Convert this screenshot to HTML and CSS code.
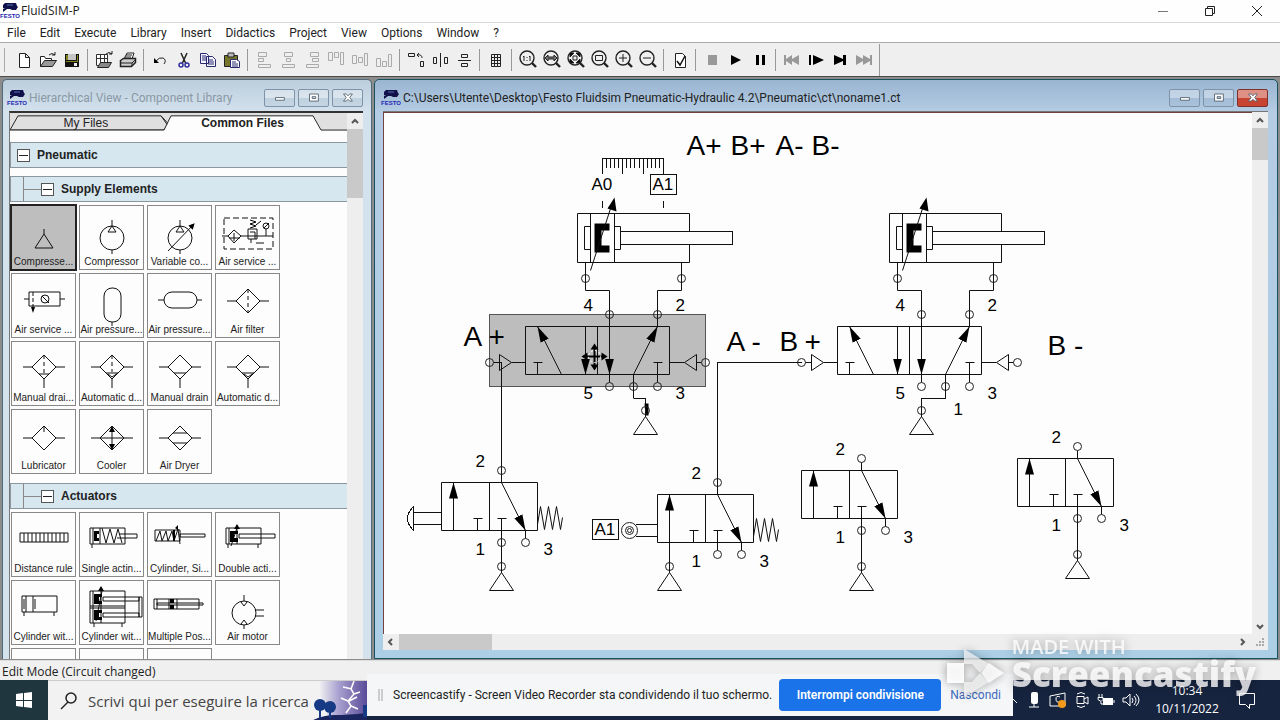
FILE: index.html
```html
<!DOCTYPE html>
<html lang="it">
<head>
<meta charset="utf-8">
<title>FluidSIM-P</title>
<link rel="stylesheet" href="styles.css">
</head>
<body>
<svg class="defs" aria-hidden="true">
  <defs>
    <symbol id="festo" viewBox="0 0 16 16" overflow="visible"><path d="M3 0h11l1 3 1 1-2 3h-4L8 6H5L1 9V6l2-1H1V2z" fill="#10104a"/><path d="M5 2h6" stroke="#5570b0"/><text x="-2" y="15" class="festo-text">FESTO</text></symbol>
    <symbol id="lens" viewBox="0 0 20 20"><circle cx="9" cy="8" r="7" fill="none" stroke="#222" stroke-width="1.4"/><path d="M14 13l4 4" stroke="#222" stroke-width="2.4"/></symbol>
    <symbol id="diamond" viewBox="0 0 64 50"><path d="M20 25l12-12 12 12-12 12zM11 25h9M44 25h9" class="ln"/></symbol>
    <symbol id="pump" viewBox="0 0 64 50"><circle cx="32" cy="32" r="12" class="ln"/><path d="M32 14v6l-4 6h8l-4-6M32 44v4" class="ln"/></symbol>
    <marker id="head" viewBox="0 0 16 9" refX="16" refY="4.5" markerWidth="16" markerHeight="9" markerUnits="userSpaceOnUse" orient="auto"><path d="M0 0l16 4.5L0 9z"/></marker>
    <marker id="mini" viewBox="0 0 6 6" refX="5" refY="3" markerWidth="6" markerHeight="6" markerUnits="userSpaceOnUse" orient="auto"><path d="M0 0l6 3-6 3z"/></marker>
    <g id="cylinder">
      <path class="ln" d="M577 213h112v49H577zM590 213v49M614 213v49M584 226h6v23h-6zM614 226h6v23h-6z"/>
      <path class="rod" d="M620 231h112v13H620z"/>
      <path d="M594 223h15v7h-8v15h8v7h-15z"/>
      <path class="ln" d="M590 270L611 205"/><path d="M614 197l-7 11 9 3z"/>
      <path class="ln" d="M585 262v28h24v36M681 262v28h-24v36"/>
      <g class="port"><circle cx="585" cy="278" r="4"/><circle cx="681" cy="278" r="4"/><circle cx="609" cy="314" r="4"/><circle cx="657" cy="314" r="4"/></g>
    </g>
    <g id="valve52">
      <path class="ln" d="M525 326h144v48H525zM597 326v48M533 362h9M537 362v12M653 362h9M657 362v20M609 374v8M633 374v24M493 362h6M511 362h14M669 362h15M696 362h5M499 354v16l12-8zM696 354v16l-12-8z"/>
      <g class="ln"><path marker-end="url(#head)" d="M561 374L537 326"/><path marker-end="url(#head)" d="M585 326V374"/><path marker-end="url(#head)" d="M609 326V374"/><path marker-end="url(#head)" d="M633 374L657 326"/></g>
      <g class="port"><circle cx="489" cy="362" r="4"/><circle cx="705" cy="362" r="4"/><circle cx="609" cy="386" r="4"/><circle cx="633" cy="386" r="4"/><circle cx="657" cy="386" r="4"/></g>
    </g>
    <g id="valve32">
      <path class="ln" d="M0 0h96v48H0zM48 0v48M32 36h9M36 36v12M56 36h9M60 36v20M60-8V0M84 48v8"/>
      <g class="ln"><path marker-end="url(#head)" d="M12 48V0"/><path marker-end="url(#head)" d="M60 0L84 48"/></g>
      <g class="port"><circle cx="60" cy="-12" r="4"/><circle cx="60" cy="60" r="4"/><circle cx="84" cy="60" r="4"/></g>
      <g class="num"><text x="34" y="-16">2</text><text x="34" y="72">1</text><text x="102" y="72">3</text></g>
    </g>
    <g id="spring"><path class="ln" d="M96 42l3-18 4 23 4-23 4 23 4-23 4 23 2-12"/></g>
    <g id="supply"><circle class="port" cx="0" cy="-6" r="4"/><path class="ln" d="M0-8V0l-12 18h24L0 0"/></g>
  </defs>
</svg>

<div class="app">
  <header class="titlebar">
    <svg class="logo"><use href="#festo"/></svg>
    <h1 class="app-name">FluidSIM-P</h1>
    <div class="sys-buttons">
      <button class="sys" aria-label="Minimize"><svg width="12" height="12"><path d="M1 6.5h10" stroke="#777"/></svg></button>
      <button class="sys" aria-label="Restore"><svg width="12" height="12"><path d="M1.500 3.500h7v7h-7zM3.500 3V1.500h7v7H9" fill="none" stroke="#222"/></svg></button>
      <button class="sys" aria-label="Close"><svg width="12" height="12"><path d="M1 1l10 10M11 1L1 11" stroke="#222"/></svg></button>
    </div>
  </header>

  <nav class="menubar">
    <button>File</button><button>Edit</button><button>Execute</button><button>Library</button><button>Insert</button><button>Didactics</button><button>Project</button><button>View</button><button>Options</button><button>Window</button><button>?</button>
  </nav>

  <div class="toolbar">
    <span class="grip"></span>
    <button aria-label="New"><svg viewBox="0 0 20 20"><path d="M5.500 3.500h6l4 4v10h-10zM11.500 3.500v4h4" fill="#fff" stroke="#222"/></svg></button>
    <button aria-label="Open"><svg viewBox="0 0 20 20"><path d="M2.500 16.500v-10h4l1 2h6v3" fill="#fff" stroke="#222"/><path d="M2.500 16.500l4-6h12l-4 6z" fill="#999" stroke="#222"/><path d="M11 5q3-3 6 0M17 2v3h-3" fill="none" stroke="#222"/></svg></button>
    <button aria-label="Save"><svg viewBox="0 0 20 20"><path d="M3 4h14v13H3z" fill="#111"/><path d="M4 5h2v5H4zM15 5h1v6h-1zM4 11h12v1H4z" fill="#858520"/><path d="M6 4h8v6H6z" fill="#c5c5c5"/><path d="M12 13h3v3h-3z" fill="#eee"/></svg></button>
    <span class="sep"></span>
    <button aria-label="Library"><svg viewBox="0 0 20 20"><path d="M2.500 4.500h11v11h-11zM6.500 4v12M10.500 4v12M2 8.500h12" fill="#fff" stroke="#333"/><path d="M3.500 17.500l3-5h11l-3 5z" fill="#888" stroke="#222"/><path d="M12 4q3-3 6 0M18 1v3h-3" fill="none" stroke="#222"/></svg></button>
    <button aria-label="Print"><svg viewBox="0 0 20 20"><path d="M6 9l3-6h7l-2 6" fill="#fff" stroke="#222"/><path d="M2.500 10.500l3-2h12v4l-4 4h-11z" fill="#ccc" stroke="#222" stroke-width="1.500"/><path d="M3 13h11l3-3M14 13v3M8 5h6M7 7h6" fill="none" stroke="#222"/></svg></button>
    <span class="sep"></span>
    <button aria-label="Undo"><svg viewBox="0 0 20 20"><path d="M6 11q3-4 7-3 4 2 1 6" fill="none" stroke="#222"/><path d="M4 8v5h5z"/></svg></button>
    <button aria-label="Cut"><svg viewBox="0 0 20 20"><path d="M7 3l5 11M13 3L8 14" stroke="#222" stroke-width="1.500"/><g fill="none" stroke="#3030a0" stroke-width="1.500"><circle cx="7" cy="15" r="2"/><circle cx="13" cy="15" r="2"/></g></svg></button>
    <button aria-label="Copy"><svg viewBox="0 0 20 20"><g fill="#f4f4ff" stroke="#282870"><path d="M2.500 3.500h6l2 2v8h-8zM8.500 6.500h6l3 3v7h-9z"/><path d="M4 6h4M4 8h4M4 10h4M10 10h5M10 12h6M10 14h6"/></g></svg></button>
    <button aria-label="Paste"><svg viewBox="0 0 20 20"><path d="M2.500 5.500h13v11h-13z" fill="#77772b" stroke="#222"/><path d="M6 3h6v4H6z" fill="#bbb" stroke="#222"/><path d="M8.500 9.500h6l3 2v6h-9z" fill="#fff" stroke="#282870"/><path d="M10 12h4M10 14h6M10 16h6" stroke="#282870"/></svg></button>
    <span class="sep"></span>
    <button class="off" aria-label="Align left" disabled><svg viewBox="0 0 20 20"><path d="M4.500 2.500h8v4h-8zM4.500 8.500h5v3h-5zM4.500 14.500h12v3h-12z"/></svg></button>
    <button class="off" aria-label="Align centre" disabled><svg viewBox="0 0 20 20"><path d="M6.500 2.500h8v4h-8zM8.500 8.500h4v3h-4zM4.500 14.500h12v3h-12z"/></svg></button>
    <button class="off" aria-label="Align right" disabled><svg viewBox="0 0 20 20"><path d="M8.500 2.500h8v4h-8zM10.500 8.500h6v3h-6zM4.500 14.500h12v3h-12z"/></svg></button>
    <button class="off" aria-label="Align top" disabled><svg viewBox="0 0 20 20"><path d="M2.500 2.500h4v8h-4zM8.500 2.500h4v5h-4zM14.500 2.500h3v12h-3z"/></svg></button>
    <button class="off" aria-label="Align middle" disabled><svg viewBox="0 0 20 20"><path d="M2.500 5.500h4v8h-4zM8.500 7.500h4v5h-4zM14.500 3.500h3v12h-3z"/></svg></button>
    <button class="off" aria-label="Align bottom" disabled><svg viewBox="0 0 20 20"><path d="M2.500 8.500h4v8h-4zM8.500 11.500h4v5h-4zM14.500 4.500h3v12h-3z"/></svg></button>
    <span class="sep"></span>
    <button class="draw" aria-label="Rotate"><svg viewBox="0 0 20 20"><path d="M2.500 3.500h6v3h-6zM14.500 11.500h3v5h-3zM11 5q5-1 5 3M13 3l-2 2 2 2"/></svg></button>
    <button class="draw" aria-label="Mirror horizontal"><svg viewBox="0 0 20 20"><path d="M3.500 7.500h3v6h-3zM10.500 3v14M14.500 7.500h3v6h-3z"/></svg></button>
    <button class="draw" aria-label="Mirror vertical"><svg viewBox="0 0 20 20"><path d="M7.500 4.500h6v3h-6zM7.500 13.500h6v3h-6zM4 10.500h13"/></svg></button>
    <span class="sep"></span>
    <button class="draw" aria-label="Grid"><svg viewBox="0 0 20 20"><path d="M5.500 4.500h9v12h-9zM8.500 4v13M11.500 4v13M5 7.500h10M5 10.500h10M5 13.500h10"/></svg></button>
    <span class="sep"></span>
    <button aria-label="Actual size"><svg viewBox="0 0 20 20"><use href="#lens"/><path d="M5 7l1-1v5M9 7v1M9 10v1M11 7l1-1v5" fill="none" stroke="#222"/></svg></button>
    <button aria-label="Previous view"><svg viewBox="0 0 20 20"><use href="#lens"/><path d="M3 8l3-3v2h6V5l3 3-3 3V9H6v2z" fill="#777" stroke="#222"/></svg></button>
    <button aria-label="Fit to window"><svg viewBox="0 0 20 20"><use href="#lens"/><path d="M4 7V3h4zM14 7V3h-4zM4 9v4h4zM14 9v4h-4z" stroke="#222"/><path d="M7 6h4v4H7z" fill="none" stroke="#222"/></svg></button>
    <button class="draw" aria-label="Zoom window"><svg viewBox="0 0 20 20"><use href="#lens"/><path d="M5.500 5.500h7v5h-7z"/></svg></button>
    <button class="draw" aria-label="Zoom in"><svg viewBox="0 0 20 20"><use href="#lens"/><path d="M5 8h8M9 4v8"/></svg></button>
    <button class="draw" aria-label="Zoom out"><svg viewBox="0 0 20 20"><use href="#lens"/><path d="M5 8h8"/></svg></button>
    <span class="sep"></span>
    <button aria-label="Check"><svg viewBox="0 0 20 20"><path d="M5.500 3.500h7l3 3v11h-10z" fill="#fff" stroke="#222"/><path d="M7 11l3 4 5-9" fill="none" stroke="#111" stroke-width="1.500"/></svg></button>
    <span class="sep"></span>
    <button aria-label="Stop"><svg viewBox="0 0 20 20"><path d="M6 5h9v10H6z" fill="#999"/></svg></button>
    <button aria-label="Start"><svg viewBox="0 0 20 20"><path d="M5 5l10 5-10 5z"/></svg></button>
    <button aria-label="Pause"><svg viewBox="0 0 20 20"><path d="M6 5h3v10H6zM12 5h3v10h-3z"/></svg></button>
    <span class="sep"></span>
    <button aria-label="Reset"><svg viewBox="0 0 20 20"><path d="M2 5h2v4l6-4v4l7-4v10l-7-4v4l-6-4v4H2z" fill="#999"/></svg></button>
    <button aria-label="Single step"><svg viewBox="0 0 20 20"><path d="M3 5h2v10H3zM7 5l11 5-11 5z"/></svg></button>
    <button aria-label="Simulate until change"><svg viewBox="0 0 20 20"><path d="M4 5l9 4V5h3v10h-3v-4l-9 4z"/></svg></button>
    <button aria-label="Next topic"><svg viewBox="0 0 20 20"><path d="M2 5l7 4V5l7 4V5h2v10h-2v-4l-7 4v-4l-7 4z" fill="#999"/></svg></button>
    <span class="sep end"></span>
  </div>

  <main class="workspace">
    <section class="window library">
      <header class="win-title">
        <svg class="logo"><use href="#festo"/></svg>
        <h2>Hierarchical View - Component Library</h2>
        <button class="wbtn" aria-label="Minimize"><svg viewBox="0 0 30 18"><path d="M10.500 8.500h10v3h-10z"/></svg></button>
        <button class="wbtn" aria-label="Maximize"><svg viewBox="0 0 30 18"><path d="M10.500 4.500h10v8h-10zM13.500 7.500h4v2h-4z"/></svg></button>
        <button class="wbtn" aria-label="Close"><svg viewBox="0 0 30 18"><path d="M10.500 4.500h3l2 2 2-2h3l-3 4 3 4h-3l-2-2-2 2h-3l3-4z"/></svg></button>
      </header>
      <div class="lib-frame">
        <div class="lib-content">
          <div class="tabs">
            <svg class="tab-shape" viewBox="0 0 337 19" preserveAspectRatio="none"><path d="M0 18L8 3h143l7 8-4 7z" fill="#e0e0e0" stroke="#222"/><path d="M0 18h154L161 3h142l8 15h26v1H0z" fill="#fdfdfd"/><path d="M151 3l6 9M0 18h154L161 3h142l8 15h26" fill="none" stroke="#222"/></svg>
            <button class="tab">My Files</button>
            <button class="tab current">Common Files</button>
          </div>
          <div class="group"><button class="toggle" aria-label="Collapse Pneumatic"></button><h3>Pneumatic</h3></div>
          <div class="group sub"><button class="toggle" aria-label="Collapse Supply Elements"></button><h3>Supply Elements</h3></div>
          <div class="tiles">
            <button class="tile selected"><svg viewBox="0 0 64 50"><path class="ln" d="M32 23v5l-9 14h18L32 28"/></svg><span>Compresse...</span></button>
            <button class="tile"><svg viewBox="0 0 64 50"><use href="#pump"/></svg><span>Compressor</span></button>
            <button class="tile"><svg viewBox="0 0 64 50"><use href="#pump"/><path class="ln" marker-end="url(#mini)" d="M20 45L46 18"/></svg><span>Variable co...</span></button>
            <button class="tile"><svg viewBox="0 0 64 50"><path class="ln" stroke-dasharray="6 3" d="M8 12h49v31H8z"/><path class="ln" d="M6 30h6l6-6 7 6-7 7-6-7M25 30h32M32 23h9v10h-9zM50 23v7M13 32h11M34 26h5v7M35 33v4M40 37h8"/><path d="M34 14l6 2-6 2 6 2-6 2M40 19l5-4" fill="none" stroke="#000"/><circle class="ln" cx="50" cy="20" r="3"/><path class="ln" d="M48 22l5-5M18 27v8"/></svg><span>Air service ...</span></button>
            <button class="tile"><svg viewBox="0 0 64 50"><path class="ln" d="M17 18h31v14H17zM12 25h5M48 25h5M30 22l7 7"/><circle class="ln" cx="33" cy="25" r="4"/><path class="ln" stroke-dasharray="4 2" d="M21 18v16"/><path d="M19 33h4l-2 6z"/></svg><span>Air service ...</span></button>
            <button class="tile"><svg viewBox="0 0 64 50"><rect class="ln" x="24" y="14" width="17" height="34" rx="8"/><path class="ln" d="M32 48v4"/></svg><span>Air pressure...</span></button>
            <button class="tile"><svg viewBox="0 0 64 50"><rect class="ln" x="16" y="18" width="33" height="16" rx="8"/><path class="ln" d="M10 26h6M49 26h5"/></svg><span>Air pressure...</span></button>
            <button class="tile"><svg viewBox="0 0 64 50"><use href="#diamond" y="2"/><path class="ln" stroke-dasharray="4 3" d="M32 15v24"/></svg><span>Air filter</span></button>
            <button class="tile"><svg viewBox="0 0 64 50"><use href="#diamond"/><path class="ln" stroke-dasharray="4 3" d="M32 13v19"/><path class="ln" d="M27 32h10M32 37v9"/></svg><span>Manual drai...</span></button>
            <button class="tile"><svg viewBox="0 0 64 50"><use href="#diamond"/><path class="ln" stroke-dasharray="4 3" d="M32 13v17"/><path class="ln" d="M26 31h12l-6 4-4-3M32 37v9"/></svg><span>Automatic d...</span></button>
            <button class="tile"><svg viewBox="0 0 64 50"><use href="#diamond"/><path class="ln" d="M26 31h12M32 37v9"/></svg><span>Manual drain</span></button>
            <button class="tile"><svg viewBox="0 0 64 50"><use href="#diamond"/><path class="ln" d="M26 31h12l-6 4-4-3M32 37v9"/></svg><span>Automatic d...</span></button>
            <button class="tile"><svg viewBox="0 0 64 50"><use href="#diamond" y="3"/><path class="ln" d="M32 16v6M30 18l2-2 2 2"/></svg><span>Lubricator</span></button>
            <button class="tile"><svg viewBox="0 0 64 50"><use href="#diamond" y="3"/><path class="ln" d="M20 28h24M32 16v24"/><path d="M29 22l3-6 3 6zM29 34l3 6 3-6z"/></svg><span>Cooler</span></button>
            <button class="tile"><svg viewBox="0 0 64 50"><use href="#diamond" y="3"/><path class="ln" d="M25 23h14M25 33h14"/></svg><span>Air Dryer</span></button>
          </div>
          <div class="group sub"><button class="toggle" aria-label="Collapse Actuators"></button><h3>Actuators</h3></div>
          <div class="tiles">
            <button class="tile"><svg viewBox="0 0 64 50"><path class="ln" d="M8 20h48v9H8zM12 20v9M16 20v9M20 20v9M24 20v9M28 20v9M32 20v9M36 20v9M40 20v9M44 20v9M48 20v9M52 20v9"/></svg><span>Distance rule</span></button>
            <button class="tile"><svg viewBox="0 0 64 50"><path class="ln" d="M10 15h35v16H10zM12 31v4M13 15v16M20 15v16M22 15l4 15 4-14 4 14 4-14 4 14M39 21h18v4H37"/><path d="M14 18h5v3h-2v4h2v3h-5z"/></svg><span>Single actin...</span></button>
            <button class="tile"><svg viewBox="0 0 64 50"><path class="ln" d="M7 17h25v11H7zM8 28l4-10 2 10 4-10 2 10 4-10 2 10 4-12 2 15M32 21h25v3H32z"/><path d="M25 17h2v11h-2zM27 15l3-3v5z"/></svg><span>Cylinder, Si...</span></button>
            <button class="tile"><svg viewBox="0 0 64 50"><path class="ln" d="M10 15h35v16H10zM12 31v4M42 31v4M13 15v16M21 15v16M23 21h36v4H23zM15 33l6-18"/><path d="M14 18h8v3h-4v4h4v4h-8zM18 16l3-5 3 5z"/></svg><span>Double acti...</span></button>
            <button class="tile"><svg viewBox="0 0 64 50"><path class="ln" d="M10 15h35v16H10zM12 31v4M42 31v4M14 15v16M21 15v16M12 18v10M23 18v10"/></svg><span>Cylinder wit...</span></button>
            <button class="tile"><svg viewBox="0 0 64 50"><path class="ln" d="M10 10h35v32H10zM10 25h35M10 27h35M13 10v32M21 10v32M14 42v4M42 42v4M23 16h36v4H23zM23 32h36v4H23zM59 16h3v20h-3zM16 40l6-30"/><path d="M14 13h8v3h-3v4h3v3h-8zM14 29h8v3h-3v4h3v3h-8zM18 10l3-5 3 5z"/></svg><span>Cylinder wit...</span></button>
            <button class="tile"><svg viewBox="0 0 64 50"><path class="ln" d="M6 18h45v10H6zM9 18v10M21 18v10M29 18v10M9 22h46v2H9z"/><path d="M22 18h4v4h-4zM22 24h4v4h-4z"/></svg><span>Multiple Pos...</span></button>
            <button class="tile"><svg viewBox="0 0 64 50"><circle class="ln" cx="28" cy="32" r="12"/><path class="ln" d="M28 14v6M28 44v4M39 29h9M39 35h9M25 21l3 4 3-4M25 43l3-4 3 4"/></svg><span>Air motor</span></button>
            <button class="tile" aria-label="Semi-rotary actuator"></button><button class="tile" aria-label="Rodless cylinder"></button><button class="tile" aria-label="Linear drive"></button>
          </div>
        </div>
        <div class="vscroll"><button aria-label="Scroll up"><svg viewBox="0 0 16 16"><path d="M5 10l3-3 3 3"/></svg></button><span class="thumb tall"></span></div>
      </div>
    </section>

    <section class="window circuit">
      <header class="win-title">
        <svg class="logo"><use href="#festo"/></svg>
        <h2>C:\Users\Utente\Desktop\Festo Fluidsim Pneumatic-Hydraulic 4.2\Pneumatic\ct\noname1.ct</h2>
        <button class="wbtn" aria-label="Minimize"><svg viewBox="0 0 30 18"><path d="M10.500 8.500h10v3h-10z"/></svg></button>
        <button class="wbtn" aria-label="Maximize"><svg viewBox="0 0 30 18"><path d="M10.500 4.500h10v8h-10zM13.500 7.500h4v2h-4z"/></svg></button>
        <button class="wbtn close" aria-label="Close"><svg viewBox="0 0 30 18"><path d="M10.500 4.500h3l2 2 2-2h3l-3 4 3 4h-3l-2-2-2 2h-3l3-4z"/></svg></button>
      </header>
      <div class="doc">
        <div class="canvas">
          <svg class="diagram" viewBox="384 113 867 520" width="867" height="520">
            <g transform="translate(.5 .5)">
            <path class="selection" d="M489 314h216v72H489z"/>
            <g class="big"><text x="686" y="154">A+</text><text x="730" y="154">B+</text><text x="775" y="154">A-</text><text x="811" y="154">B-</text><text x="463" y="345">A</text><text x="488" y="345">+</text><text x="726" y="350">A -</text><text x="779" y="350">B</text><text x="804" y="350">+</text><text x="1047" y="354">B -</text></g>
            <path class="ln" d="M602 173V158h61v15M606 158v9M610 158v9M614 158v9M618 158v9M622 158v15M626 158v9M630 158v9M634 158v9M639 158v9M643 158v15M647 158v9M651 158v9M655 158v9M659 158v9M602 200v7M663 200v7M650 174h26v20h-26z"/>
            <g class="tag"><text x="591" y="189">A0</text><text x="652" y="189">A1</text><text x="594" y="534">A1</text></g>
            <use href="#cylinder"/><use href="#cylinder" x="312"/>
            <use href="#valve52"/><use href="#valve52" x="312"/>
            <g class="num"><text x="583" y="310">4</text><text x="675" y="310">2</text><text x="583" y="398">5</text><text x="675" y="398">3</text><text x="895" y="310">4</text><text x="987" y="310">2</text><text x="895" y="398">5</text><text x="987" y="398">3</text><text x="953" y="414">1</text></g>
            <path class="ln" d="M633 398h12v18M945 398h-24v18M499 362h2v120M717 494V362h84"/>
            <path d="M644 403h4v12h-3z"/>
            <use href="#supply" x="645" y="416"/><use href="#supply" x="921" y="416"/>
            <path class="ln" d="M501 530v42M669 542v30M861 518v54M1077 506v54"/>
            <use href="#valve32" x="441" y="482"/><use href="#spring" x="441" y="482"/>
            <path class="ln" d="M441 512h-28M441 524h-28M413 506v24q-12-12 0-24"/>
            <use href="#valve32" x="657" y="494"/><use href="#spring" x="657" y="494"/>
            <path class="ln" d="M635 524h22M635 536h22M592 519h26v20h-26z"/><g class="port"><circle cx="629" cy="530" r="8"/><circle cx="629" cy="530" r="4"/><circle cx="629" cy="530" r="2"/></g>
            <use href="#valve32" x="801" y="470"/><use href="#valve32" x="1017" y="458"/>
            <use href="#supply" x="501" y="572"/><use href="#supply" x="669" y="572"/><use href="#supply" x="861" y="572"/><use href="#supply" x="1077" y="560"/>
            <path class="cursor" d="M594 346v22M583 356h22"/><path d="M590 349l4-6 4 6zM590 364l4 6 4-6zM587 352l-6 4 6 4zM601 352l6 4-6 4z"/><circle cx="594" cy="356" r="6" fill="none" stroke="#fff" stroke-dasharray="2 2"/>
            </g>
          </svg>
        </div>
        <div class="vscroll"><button aria-label="Scroll up"><svg viewBox="0 0 16 16"><path d="M5 10l3-3 3 3"/></svg></button><span class="thumb"></span><button class="last" aria-label="Scroll down"><svg viewBox="0 0 16 16"><path d="M5 7l3 3 3-3"/></svg></button></div>
        <div class="hscroll"><button aria-label="Scroll left"><svg viewBox="0 0 16 16"><path d="M9 5L6 8l3 3"/></svg></button><span class="thumb"></span><button class="last" aria-label="Scroll right"><svg viewBox="0 0 16 16"><path d="M5 5l3 3-3 3"/></svg></button></div>
        <svg class="size-grip" viewBox="0 0 16 16"><path d="M10 4h2v2h-2zM7 7h2v2H7zM10 7h2v2h-2zM4 10h2v2H4zM7 10h2v2H7zM10 10h2v2h-2z"/></svg>
      </div>
    </section>
  </main>

  <div class="statusbar" role="status">Edit Mode (Circuit changed)</div>

  <footer class="taskbar">
    <button class="start" aria-label="Start"><svg width="16" height="16"><path d="M0 2l7-1v7H0zM8 1l8-1v8H8zM0 9h7v6l-7-1zM8 9h8v7l-8-1z" fill="#fff"/></svg></button>
    <div class="search">
      <svg width="18" height="18"><circle cx="11" cy="6" r="5" fill="none" stroke="#222" stroke-width="1.500"/><path d="M8 10l-7 7" stroke="#222" stroke-width="1.500"/></svg>
      <input type="text" aria-label="Cerca" placeholder="Scrivi qui per eseguire la ricerca">
      <svg class="storm" viewBox="0 0 56 40"><defs><linearGradient id="sky"><stop offset="0" stop-color="#f2f2f2"/><stop offset=".4" stop-color="#aaa2d0"/><stop offset="1" stop-color="#5a4a98"/></linearGradient></defs><path d="M8 0h48v40H20Q8 20 8 0z" fill="url(#sky)"/><path d="M0 40q12-6 24-6t32-2v8z" fill="#1a2560"/><g fill="#173a85"><circle cx="9" cy="24" r="6"/><circle cx="19" cy="26" r="6"/><path d="M8 25h2v12H8zM18 26h2v11h-2zM52 24h4v12h-4z"/></g><path d="M43 0l-3 8 3 5-6 7 3 5-5 7M41 8l-9-2M43 13l6-2M37 20l-7-3M40 25l7 3M38 20l8-4" fill="none" stroke="#fff" stroke-width="1.500"/></svg>
    </div>
    <div class="tray">
      <svg width="16" height="16"><path d="M2 11l6-6 6 6" fill="none" stroke="#fff"/></svg>
      <svg width="16" height="20"><rect x="5" y="2" width="7" height="12" rx="2" fill="#fff"/><path d="M3 17h10M8 14v3" stroke="#fff"/></svg>
      <svg width="18" height="18"><path d="M1 5l15-3v13H1z" fill="none" stroke="#fff"/><path d="M11 6q-4-2-4 2t4 3" fill="none" stroke="#fff"/><circle cx="13" cy="13" r="4" fill="#f39a1b"/></svg>
      <svg width="16" height="18"><path d="M3 5.500h7v7H3zM10 8l4-2v7l-4-2M3 3q4-3 8 0M3 15q4 3 8 0" fill="none" stroke="#fff"/></svg>
      <svg width="18" height="16"><path d="M6 6h10v7H6z" fill="#fff"/><path d="M17 8v3M2 2v3M5 2v3M1 5.500h5v2l-2 2-3-2zM4 10v2h2" fill="none" stroke="#fff"/></svg>
      <svg width="18" height="16"><path d="M1 6h3l4-4v12l-4-4H1zM10 6q2 2 0 5M12 4q4 4 0 9M14 2q6 6 0 12" fill="none" stroke="#fff"/></svg>
      <div class="clock"><time>10:34</time><time>10/11/2022</time></div>
      <svg width="18" height="18"><path d="M1.500 2.500h15v11h-5v4l-4-4h-6z" fill="none" stroke="#fff"/></svg>
    </div>
    <div class="share">
      <span class="handle"></span>
      <p>Screencastify - Screen Video Recorder sta condividendo il tuo schermo.</p>
      <button class="stop">Interrompi condivisione</button>
      <button class="hide">Nascondi</button>
    </div>
  </footer>

  <div class="watermark">
    <svg width="58" height="48" viewBox="0 0 58 48"><path d="M1 14h17v20H1z" fill="#fff" opacity=".9"/><path d="M18 0l25 15-9 9-8-9h-8zM18 48l25-15-9-9-8 9h-8z" fill="#f4f4f4" opacity=".75"/><path d="M43 14l15 10-15 10-8-10z" fill="#fff" opacity=".85"/></svg>
    <div><p class="made">MADE WITH</p><p class="brand">Screencastify</p></div>
  </div>
</div>
</body>
</html>
```

FILE: styles.css
```css
* { box-sizing: border-box; }

body {
  margin: 0;
  font: 12px/16px "Open Sans", "Noto Sans", sans-serif;
  color: #222;
  background: #f0f0f0;
}

button {
  margin: 0;
  padding: 0;
  border: 0;
  background: none;
  color: inherit;
  font: inherit;
}

h1, h2, h3, p { margin: 0; font-size: 12px; font-weight: 400; }

svg { display: block; flex: none; }

.defs { position: absolute; width: 0; height: 0; }

.app {
  position: relative;
  display: flex;
  flex-direction: column;
  height: 100vh;
  overflow: hidden;
}

.logo { width: 16px; height: 16px; overflow: visible; }
.festo-text { font: bold 6px "Liberation Sans", sans-serif; fill: #2424b4; }

.titlebar {
  display: flex;
  align-items: center;
  gap: 3px;
  height: 23px;
  padding-left: 2px;
  background: #fefefe;
  border-bottom: 1px solid #d8d8d8;
}
.sys-buttons { display: flex; margin-left: auto; }
.sys { display: grid; place-items: center; width: 47px; height: 22px; }

.menubar {
  display: flex;
  height: 20px;
  padding-top: 1px;
  background: #fff;
  border-bottom: 1px solid #aaa;
  font-family: Roboto, sans-serif;
}
.menubar button { padding: 0 7px; }

.toolbar {
  display: flex;
  align-items: center;
  height: 33px;
  padding-top: 1px;
  background: #efefef;
}
.toolbar button { display: grid; place-items: center; width: 24px; height: 24px; }
.toolbar svg { width: 20px; height: 20px; }
.grip { width: 5px; height: 24px; margin-right: 7px; border-right: 1px solid #aaa; }
.sep { width: 8px; height: 22px; background: linear-gradient(#999, #999) 3px 0 / 1px 100% no-repeat; }
.sep.end { height: 32px; }
.off path { fill: none; stroke: #aaa; }
.draw path { fill: none; stroke: #222; }

.workspace {
  display: flex;
  flex: 1;
  gap: 2px;
  min-height: 0;
  padding: 2px 2px 1px;
  background: #8c8c8c;
  border-top: 1px solid #4c4c4c;
}

.window {
  display: flex;
  flex-direction: column;
  min-width: 0;
  min-height: 0;
  padding: 0 8px;
  border: 1px solid #526b7a;
  border-radius: 5px 5px 0 0;
}
.library { flex: 0 0 370px; padding-left: 6px; background: linear-gradient(#bccddc, #d3e2ed 32px); border-bottom: 0; }
.circuit { flex: 1; padding-right: 9px; padding-bottom: 8px; background: linear-gradient(#9ab5d1, #b4cce4 32px, #accfe6); border-color: #18535f; }

.win-title { display: flex; align-items: center; gap: 4px; height: 31px; flex: none; padding-top: 4px; }
.win-title h2 { flex: 1; overflow: hidden; white-space: nowrap; font-family: Roboto, sans-serif; }
.library h2 { color: #8b98a5; }
.wbtn {
  width: 31px;
  height: 18px;
  border: 1px solid #7e93a7;
  border-radius: 2px;
  background: linear-gradient(#ffffff50 50%, #8098b020 50%);
}
.wbtn svg { width: 100%; height: 100%; }
.wbtn path { fill: #fff; stroke: #536270; fill-rule: evenodd; }
.win-title .wbtn + .wbtn { margin-left: -1px; }
.wbtn.close { border-color: #80312c; background: linear-gradient(#de9084 50%, #c64431 50%); }

.lib-frame { display: flex; flex: 1; min-height: 0; background: #fdfdfd; border-top: 2px solid #333; border-left: 1px solid #777; }
.lib-content { flex: 1; min-width: 0; overflow: hidden; font-family: "Liberation Sans", sans-serif; }
.tabs { position: relative; display: flex; height: 18px; background: #e0e0e0; }
.tab-shape { position: absolute; inset: 0; width: 100%; height: 100%; }
.tab { position: relative; flex: 0 0 45%; padding-top: 2px; font-size: 12px; }
.tab.current { font-weight: 700; flex-basis: 48%; }

.group {
  display: flex;
  align-items: center;
  gap: 7px;
  height: 26px;
  margin-top: 11px;
  padding-left: 6px;
  background: #d6e7f0;
  border: solid #8b979d;
  border-width: 1px 0 1px 1px;
}
.group h3 { font-weight: 700; }
.group.sub { margin-top: 8px; padding-left: 12px; gap: 0; }
.group.sub::before { content: ""; width: 17px; height: 24px; background: linear-gradient(#888, #888) 0 50% / 100% 1px no-repeat; border-left: 1px solid #888; }
.group.sub h3 { margin-left: 7px; }
.tiles + .group.sub { margin-top: 9px; }
.toggle { width: 13px; height: 13px; border: 1px solid #555; background: linear-gradient(#222, #222) 50% / 9px 1px no-repeat #fff; }

.tiles { display: grid; grid-template-columns: repeat(4, 65px); gap: 3px; padding: 3px 0 0 1px; }
.tile {
  display: flex;
  flex-direction: column;
  align-items: center;
  height: 65px;
  overflow: hidden;
  border: 1px solid #888;
  font-size: 10px;
  line-height: 12px;
  white-space: nowrap;
}
.tile svg { width: 64px; height: 50px; overflow: visible; }
.tile.selected { background: #bebebe; outline: 1px solid #222; border-color: #222; }
.ln { fill: none; stroke: #111; stroke-width: 1; }

.vscroll { display: flex; flex-direction: column; width: 16px; background: #eee; }
.vscroll button, .hscroll button { width: 16px; height: 16px; }
.vscroll path, .hscroll path { fill: none; stroke: #555; stroke-width: 2; }
.thumb { background: #c9c9c9; height: 32px; }
.thumb.tall { height: 69px; }
.hscroll { display: flex; background: #eee; }
.hscroll .thumb { width: 93px; height: auto; }
.vscroll .last { margin-top: auto; }
.hscroll .last { margin-left: auto; }

.doc {
  display: grid;
  flex: 1;
  grid-template-columns: minmax(0, 1fr) 16px;
  grid-template-rows: minmax(0, 1fr) 16px;
  min-height: 0;
  border-top: 1px solid #777;
  background: #eee;
}
.canvas { overflow: hidden; background: #fdfdfd; border: solid #74433f; border-width: 1px 0 0 1px; }
.size-grip path { fill: #aaa; }

.big { font: 28px "Liberation Sans", sans-serif; }
.num { font: 17px "Liberation Sans", sans-serif; }
.tag { font: 17px "Liberation Sans", sans-serif; }
.diagram .ln { shape-rendering: crispEdges; }
.port { fill: none; stroke: #222; }
.rod { fill: #fdfdfd; stroke: #111; shape-rendering: crispEdges; }
.selection { fill: #bdbdbd; stroke: #555; shape-rendering: crispEdges; }
.cursor { stroke: #000; stroke-width: 2; }

.statusbar { height: 20px; padding: 3px 2px 0; background: #f0f0f0; border-top: 1px solid #ddd; }

.taskbar { position: relative; display: flex; height: 40px; flex: none; background: #17243f; }
.start { display: grid; place-items: center; width: 48px; background: #20363f; }
.search { display: flex; align-items: center; width: 319px; padding-left: 12px; background: #f2f2f2; border-top: 1px solid #ccc; }
.search input {
  flex: 1;
  min-width: 0;
  margin-left: 10px;
  padding: 0;
  border: 0;
  background: none;
  font: 15px "Open Sans", "Noto Sans", sans-serif;
}
.search input::placeholder { color: #444; opacity: 1; }
.storm { width: 56px; height: 40px; }

.tray { display: flex; align-items: center; gap: 7px; margin-left: auto; padding-right: 24px; color: #fff; }
.clock { display: flex; flex-direction: column; width: 80px; text-align: center; line-height: 18px; margin-right: 4px; }

.share {
  position: absolute;
  left: 367px;
  right: 267px;
  bottom: 4px;
  display: flex;
  align-items: center;
  height: 42px;
  padding-left: 11px;
  background: #f4f6f7;
  font-family: Roboto, sans-serif;
}
.handle { width: 5px; height: 12px; margin-right: 10px; border: solid #ccc; border-width: 0 2px; }
.share p { flex: 1; white-space: nowrap; }
.stop { width: 162px; height: 32px; border-radius: 4px; background: #1a73e8; color: #fff; font-weight: 600; }
.hide { margin: 0 12px 0 9px; color: #3d69bd; }

.watermark {
  position: absolute;
  right: 24px;
  bottom: 28px;
  display: flex;
  align-items: flex-end;
  gap: 8px;
  color: #ffffffc8;
  pointer-events: none;
  filter: drop-shadow(0 0 5px #0006);
}
.watermark svg { margin-bottom: -5px; }
.made { font: 600 20px/18px "Open Sans", sans-serif; }
.brand { font: 800 35px/36px "Open Sans", sans-serif; }
```
